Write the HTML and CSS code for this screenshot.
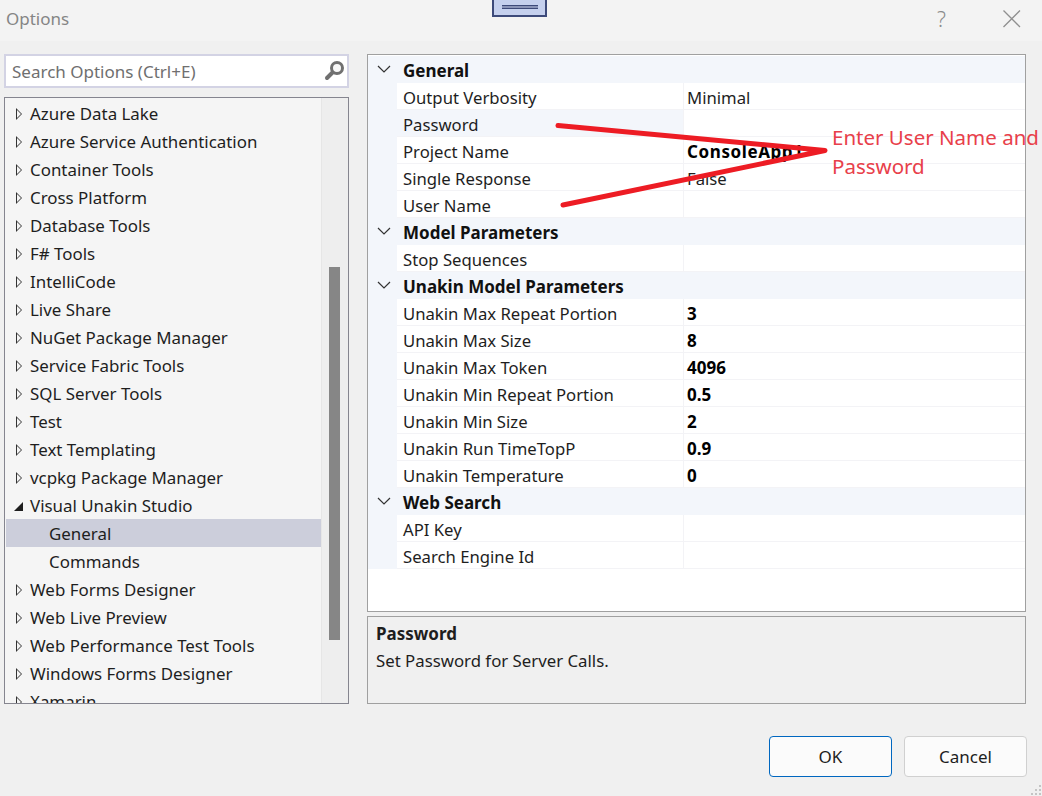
FILE: index.html
```html
<!DOCTYPE html>
<html lang="en">
<head>
    <meta charset="UTF-8">
    <title>Options</title>
    <link rel="stylesheet" href="styles.css">
</head>
<body>
    <div class="dialog">
        <div class="titlebar">
            <span class="title">Options</span>
            <span class="help">?</span>
            <svg class="close" width="18" height="18" viewBox="0 0 18 18"><path d="M0.500 0.500 L17 17 M17 0.500 L0.500 17" stroke="#8f8f8f" stroke-width="1.3" fill="none"/></svg>
        </div>

        <div class="main">
            <!-- colonne de gauche -->
            <div class="left">
                <div class="search">
                    <span class="search-text">Search Options (Ctrl+E)</span>
                    <svg width="22" height="22" viewBox="0 0 22 22"><circle cx="14" cy="8" r="5.500" fill="#f8f8f8" stroke="#707070" stroke-width="3"/><path d="M9.500 12.500 L4 18" stroke="#707070" stroke-width="4" stroke-linecap="round"/></svg>
                </div>
                <div class="tree">
                    <div class="tree-list">
                        <div class="node"><i class="tri"></i>Azure Data Lake</div>
                        <div class="node"><i class="tri"></i>Azure Service Authentication</div>
                        <div class="node"><i class="tri"></i>Container Tools</div>
                        <div class="node"><i class="tri"></i>Cross Platform</div>
                        <div class="node"><i class="tri"></i>Database Tools</div>
                        <div class="node"><i class="tri"></i>F# Tools</div>
                        <div class="node"><i class="tri"></i>IntelliCode</div>
                        <div class="node"><i class="tri"></i>Live Share</div>
                        <div class="node"><i class="tri"></i>NuGet Package Manager</div>
                        <div class="node"><i class="tri"></i>Service Fabric Tools</div>
                        <div class="node"><i class="tri"></i>SQL Server Tools</div>
                        <div class="node"><i class="tri"></i>Test</div>
                        <div class="node"><i class="tri"></i>Text Templating</div>
                        <div class="node"><i class="tri"></i>vcpkg Package Manager</div>
                        <div class="node"><i class="tri open"></i>Visual Unakin Studio</div>
                        <div class="node child selected">General</div>
                        <div class="node child">Commands</div>
                        <div class="node"><i class="tri"></i>Web Forms Designer</div>
                        <div class="node"><i class="tri"></i>Web Live Preview</div>
                        <div class="node"><i class="tri"></i>Web Performance Test Tools</div>
                        <div class="node"><i class="tri"></i>Windows Forms Designer</div>
                        <div class="node"><i class="tri"></i>Xamarin</div>
                    </div>
                    <div class="scrollbar"><div class="thumb"></div></div>
                </div>
            </div>

            <!-- colonne de droite -->
            <div class="right">
                <div class="grid">
                    <div class="cat"><svg class="chev" width="14" height="9" viewBox="0 0 14 9"><path d="M1 1 L7 7 L13 1" stroke="#333" stroke-width="1.2" fill="none"/></svg>General</div>
                    <div class="prop"><span class="name">Output Verbosity</span><span class="val">Minimal</span></div>
                    <div class="prop current"><span class="name">Password</span><span class="val"></span></div>
                    <div class="prop"><span class="name">Project Name</span><span class="val bold wide">ConsoleApp1</span></div>
                    <div class="prop"><span class="name">Single Response</span><span class="val">False</span></div>
                    <div class="prop"><span class="name">User Name</span><span class="val"></span></div>

                    <div class="cat"><svg class="chev" width="14" height="9" viewBox="0 0 14 9"><path d="M1 1 L7 7 L13 1" stroke="#333" stroke-width="1.2" fill="none"/></svg>Model Parameters</div>
                    <div class="prop"><span class="name">Stop Sequences</span><span class="val"></span></div>

                    <div class="cat"><svg class="chev" width="14" height="9" viewBox="0 0 14 9"><path d="M1 1 L7 7 L13 1" stroke="#333" stroke-width="1.2" fill="none"/></svg>Unakin Model Parameters</div>
                    <div class="prop"><span class="name">Unakin Max Repeat Portion</span><span class="val bold">3</span></div>
                    <div class="prop"><span class="name">Unakin Max Size</span><span class="val bold">8</span></div>
                    <div class="prop"><span class="name">Unakin Max Token</span><span class="val bold">4096</span></div>
                    <div class="prop"><span class="name">Unakin Min Repeat Portion</span><span class="val bold">0.5</span></div>
                    <div class="prop"><span class="name">Unakin Min Size</span><span class="val bold">2</span></div>
                    <div class="prop"><span class="name">Unakin Run TimeTopP</span><span class="val bold">0.9</span></div>
                    <div class="prop"><span class="name">Unakin Temperature</span><span class="val bold">0</span></div>

                    <div class="cat"><svg class="chev" width="14" height="9" viewBox="0 0 14 9"><path d="M1 1 L7 7 L13 1" stroke="#333" stroke-width="1.2" fill="none"/></svg>Web Search</div>
                    <div class="prop"><span class="name">API Key</span><span class="val"></span></div>
                    <div class="prop"><span class="name">Search Engine Id</span><span class="val"></span></div>
                </div>
                <div class="desc">
                    <div class="desc-title">Password</div>
                    <div class="desc-text">Set Password for Server Calls.</div>
                </div>
            </div>
        </div>

        <div class="footer">
            <button class="btn btn-ok">OK</button>
            <button class="btn">Cancel</button>
        </div>
    </div>

    <!-- annotations par-dessus la capture -->
    <div class="popup"><div class="popup-lines"></div></div>
    <svg class="arrows" width="1042" height="796" viewBox="0 0 1042 796">
        <path d="M558 125.500 L825 150.500 L563 205" stroke="#ed1c24" stroke-width="5" stroke-linecap="round" stroke-linejoin="round" fill="none"/>
    </svg>
    <div class="note">Enter User Name and<br>Password</div>
    <svg class="grip" width="12" height="12" viewBox="0 0 12 12"><path d="M9 1h2v2H9zM5 5h2v2H5zM9 5h2v2H9zM1 9h2v2H1zM5 9h2v2H5zM9 9h2v2H9z" fill="#c4c4c4"/></svg>
</body>
</html>
```

FILE: styles.css
```css
/* Fenetre d'options */
body {
    margin: 0;
    width: 1042px;
    height: 796px;
    position: relative;
    overflow: hidden;
    background-color: #f0f0f0;
    font-family: "Noto Sans", "Open Sans", sans-serif;
    font-size: 16.8px;
    color: #1e1e1e;
}

.dialog {
    display: flex;
    flex-direction: column;
    height: 796px;
}

/* Barre de titre */
.titlebar {
    height: 41px;
    flex: none;
    display: flex;
    align-items: center;
    background-color: #f3f3f3;
    padding: 0 21px 4px 6px;
    box-sizing: border-box;
}

.title {
    font-size: 17px;
    color: #858585;
    flex: 1;
}

.help {
    font-size: 21px;
    font-weight: 300;
    color: #8a8a8a;
    margin-right: 57px;
}

/* Colonnes */
.main {
    display: flex;
    padding: 13px 0 0 4px;
    gap: 18px;
}

.left {
    width: 345px;
    display: flex;
    flex-direction: column;
    gap: 9px;
}

.search {
    height: 34px;
    box-sizing: border-box;
    border: 2px solid #d3d3e4;
    background-color: #fff;
    display: flex;
    align-items: center;
    justify-content: space-between;
    padding: 0 2px 0 6px;
    color: #6f6f6f;
    font-size: 17px;
}

.search-text {
    line-height: 28px;
    padding-top: 2px;
}

.tree {
    height: 607px;
    box-sizing: border-box;
    border: 1px solid #85858f;
    background-color: #f5f5f5;
    display: flex;
    overflow: hidden;
    font-size: 16.9px;
}

.tree-list {
    flex: 1;
    padding: 1px 0 0 1px;
    min-width: 0;
}

.node {
    height: 28px;
    line-height: 30px;
    padding-left: 24px;
    position: relative;
    white-space: nowrap;
}

.node.child {
    padding-left: 43px;
}

.node.selected {
    background-color: #cccedb;
}

/* Triangle de l'arbre */
.tri {
    position: absolute;
    left: 10px;
    top: 9px;
    width: 0;
    height: 0;
    border-left: 6px solid #333;
    border-top: 6px solid transparent;
    border-bottom: 6px solid transparent;
}

.tri::after {
    content: "";
    position: absolute;
    left: -5px;
    top: -4px;
    border-left: 4px solid #f5f5f5;
    border-top: 4px solid transparent;
    border-bottom: 4px solid transparent;
}

.tri.open {
    left: 8px;
    top: 11px;
    border-left: 9px solid transparent;
    border-top: 0;
    border-right: 0;
    border-bottom: 9px solid #1e1e1e;
}

.tri.open::after {
    display: none;
}

.scrollbar {
    width: 27px;
    flex: none;
    background-color: #eeeeee;
    border-left: 1px solid #e6e6e6;
    box-sizing: border-box;
    padding: 169px 0 0 7px;
}

.thumb {
    width: 11px;
    height: 373px;
    background-color: #868686;
}

/* Grille de proprietes */
.right {
    width: 659px;
    display: flex;
    flex-direction: column;
    gap: 4px;
}

.grid {
    height: 558px;
    box-sizing: border-box;
    border: 1px solid #a0a0a0;
    background-color: #fff;
    padding-top: 1px;
}

.cat {
    height: 27px;
    line-height: 29px;
    background-color: #f3f6fb;
    font-weight: bold;
    font-size: 17px;
    padding-left: 35px;
    position: relative;
    color: #111;
}

.chev {
    position: absolute;
    left: 9px;
    top: 9px;
}

.prop {
    height: 27px;
    line-height: 30px;
    box-sizing: border-box;
    display: flex;
    margin-left: 29px;
    box-shadow: -29px 0 0 #f3f6fb;
    border-bottom: 1px solid #f3f3f6;
    font-size: 16.7px;
}

.name {
    width: 287px;
    flex: none;
    box-sizing: border-box;
    padding-left: 6px;
    border-right: 1px solid #f3f3f6;
}

.prop.current .name {
    background-color: #f3f6fb;
}

.val {
    padding-left: 3px;
}

.bold {
    font-weight: bold;
    font-size: 17px;
    color: #000;
}

.wide {
    letter-spacing: 0.6px;
}

.desc {
    height: 88px;
    box-sizing: border-box;
    border: 1px solid #a0a0a0;
    padding: 3px 8px;
}

.desc-title {
    font-weight: bold;
    font-size: 17px;
    line-height: 28px;
}

.desc-text {
    line-height: 26px;
}

/* Boutons */
.footer {
    margin-top: 32px;
    display: flex;
    justify-content: flex-end;
    gap: 12px;
    padding-right: 15px;
}

.btn {
    width: 123px;
    height: 41px;
    font-family: inherit;
    font-size: 17px;
    color: #1e1e1e;
    background-color: #fbfbfb;
    border: 1px solid #d0d0d0;
    border-radius: 4px;
}

.btn-ok {
    border: 1px solid #0067c0;
}

/* Annotations */
.popup {
    position: absolute;
    left: 492px;
    top: -2px;
    width: 55px;
    height: 19px;
    box-sizing: border-box;
    border: 2px solid #3d4a7a;
    background-color: #c5d0ee;
}

.popup-lines {
    margin: 5px 0 0 8px;
    width: 36px;
    height: 2px;
    background-color: #8a94b8;
    border-top: 1px solid #3d4a7a;
    border-bottom: 1px solid #3d4a7a;
}

.arrows {
    position: absolute;
    left: 0;
    top: 0;
}

.note {
    position: absolute;
    left: 832px;
    top: 123px;
    font-size: 20.500px;
    line-height: 29px;
    color: #e8404a;
    white-space: nowrap;
}

.grip {
    position: absolute;
    right: 0;
    bottom: 0;
}
```
